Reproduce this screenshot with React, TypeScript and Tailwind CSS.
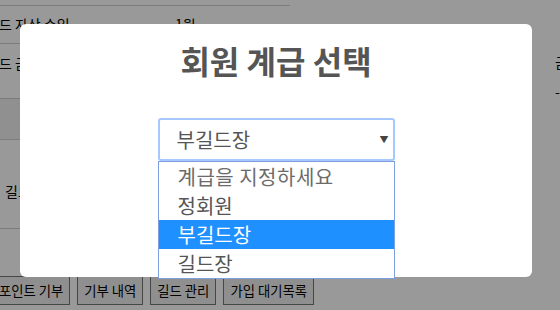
import React from 'react';

const options = ['계급을 지정하세요', '정회원', '부길드장', '길드장'];

const GuildPage = () => {
  return (
    <div className="h-[310px] w-[560px] overflow-hidden bg-white text-[14px] text-black">
      <div className="flex">
        {/* info table, cut off on the left */}
        <div className="-ml-[14px] w-[304px] shrink-0 pt-[5px]">
          <div className="flex h-[38px] items-center border-t border-[#cfcfcf]">
            <span className="w-[189px]">길드 자산 수입</span>
            <span>1원</span>
          </div>
          <div className="flex h-[55px] items-start border-t border-[#cfcfcf] pt-[9px]">
            <span className="w-[189px]">길드 금고</span>
          </div>
          <div className="h-[41px] border-t border-[#cfcfcf] bg-[#f0f0f0]" />
          <div className="flex h-[89px] items-center border-t border-[#cfcfcf] pt-[14px] pl-[19px]">
            <span>길드 멤버</span>
          </div>
          <div className="border-t border-[#cfcfcf]" />
        </div>
        <div className="ml-[265px] flex shrink-0 flex-col gap-[8px] whitespace-nowrap pt-[52px]">
          <span>금고</span>
          <span>-</span>
        </div>
      </div>

      {/* action buttons */}
      <div className="-ml-[8px] mt-[47px] flex gap-[7px]">
        {['포인트 기부', '기부 내역', '길드 관리', '가입 대기목록'].map((b) => (
          <button
            key={b}
            className="h-[29px] shrink-0 whitespace-nowrap border border-[#767676] bg-[#efefef] px-[6px] text-[13.33px] leading-none text-black"
          >
            {b}
          </button>
        ))}
      </div>
    </div>
  );
};

const GradeModal = () => {
  return (
    <div className="absolute inset-0 bg-black/40 pl-[20px] pt-[24px]">
      <div className="flex h-[253px] w-[512px] flex-col items-center rounded-[6px] bg-white pt-[14px]">
        <h2 className="text-[32px] leading-[45px] font-bold text-[#555555]">회원 계급 선택</h2>

        {/* fake select, opened */}
        <div className="relative mt-[35px] w-[237px]">
          <div className="flex h-[43px] items-center justify-between rounded-[3px] border-2 border-[#a6c8ff] pl-[17px] pr-[4px] text-[20px] text-[#555555]">
            <span>부길드장</span>
            <span className="text-[9px] text-[#444444]">▼</span>
          </div>
          <ul className="absolute left-0 top-[43px] w-[237px] border border-[#7d9fe0] bg-white">
            {options.map((o) => (
              <li
                key={o}
                className={
                  o === '부길드장'
                    ? 'flex h-[29px] items-center bg-[#1e90ff] pl-[19px] text-[20px] text-white'
                    : o === '계급을 지정하세요'
                      ? 'flex h-[29px] items-center pl-[19px] text-[20px] tracking-[0.5px] text-[#6b6b6b]'
                      : 'flex h-[29px] items-center pl-[19px] text-[20px] text-[#555555]'
                }
              >
                {o}
              </li>
            ))}
          </ul>
        </div>
      </div>
    </div>
  );
};

export default function App() {
  return (
    <div className="relative h-[310px] w-[560px] overflow-hidden font-['Noto_Sans_CJK_KR','Noto_Sans',sans-serif]">
      <GuildPage />
      <GradeModal />
    </div>
  );
}
